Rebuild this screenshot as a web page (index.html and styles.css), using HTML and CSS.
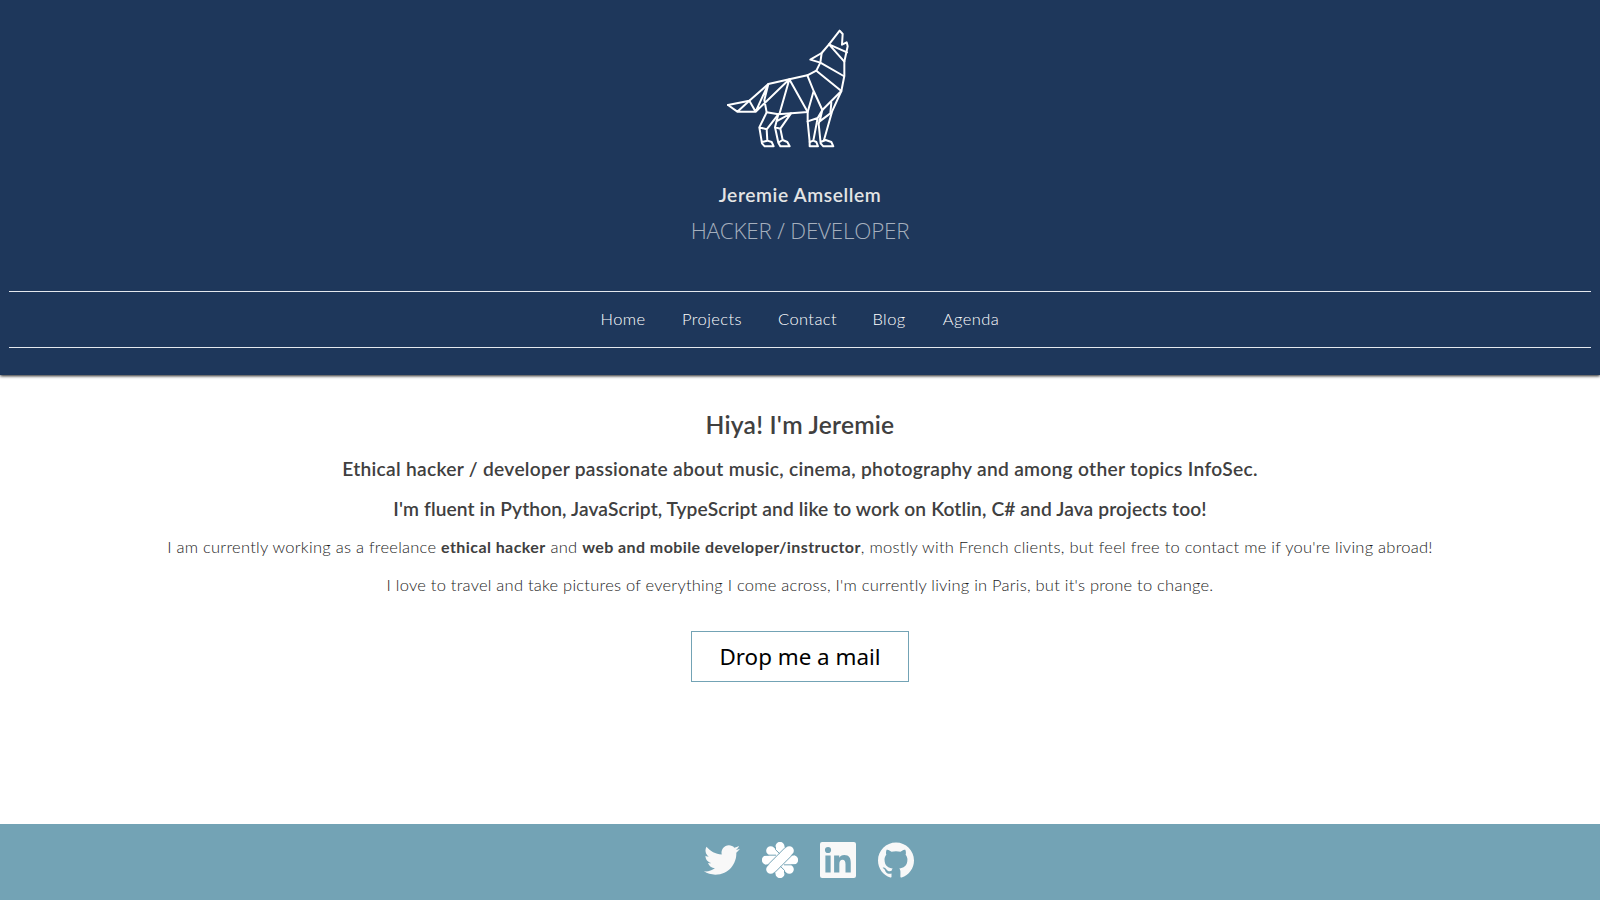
FILE: index.html
```html
<!DOCTYPE html>
<html lang="en">
<head>
<meta charset="utf-8">
<title>Jeremie Amsellem</title>
<link rel="stylesheet" href="styles.css">
</head>
<body>
<header class="header">
  <svg class="logo" viewBox="0 0 435 405" fill="none" stroke="#fff" stroke-width="6" stroke-linejoin="round" stroke-linecap="round">
    <path d="M39 255L103 242L160 192L223 178L277 166L304 152L316 128L286 119L320 99L342 73L374 32L383 42L381 74L395 67L398 79L388 125V168L379 213L351 275L327 360"/>
    <path d="M39 255L67 275H122L160 192L148 240L155 277L190 283L278 276L223 178L122 275L103 242L67 275M223 178L193 283"/>
    <path d="M320 99L316 128L386 168M304 152L379 213L322 270L296 213L277 166M342 73L388 125M342 73L396 97M296 213L278 276V304L284 366"/>
    <path d="M155 277L133 322L141 370L149 379H176L170 366L157 362L155 328L190 283M133 322L155 328M141 366L157 362"/>
    <path d="M190 283L180 322L190 368L196 379H224L217 366L203 360L196 326L228 280M180 322L196 326M184 304L228 280M190 368L203 360"/>
    <path d="M278 304L308 294L322 270L311 312L317 370L325 379H355L349 366L332 360M308 294L295 362L284 366V379H309L304 366L295 362M322 270L314 304L346 280L349 248M317 366L332 360"/>
  </svg>
  <h1 class="name">Jeremie Amsellem</h1>
  <p class="role">HACKER / DEVELOPER</p>
  <nav class="nav">
    <a>Home</a><a>Projects</a><a>Contact</a><a>Blog</a><a>Agenda</a>
  </nav>
</header>
<main class="main">
  <h2 class="hello">Hiya! I'm Jeremie</h2>
  <h3 class="lead lead-first">Ethical hacker / developer passionate about music, cinema, photography and among other topics InfoSec.</h3>
  <h3 class="lead lead-langs">I'm fluent in Python, JavaScript, TypeScript and like to work on Kotlin, C# and Java projects too!</h3>
  <p class="text">I am currently working as a freelance <b>ethical hacker</b> and <b>web and mobile developer/instructor</b>, mostly with French clients, but feel free to contact me if you're living abroad!</p>
  <p class="text text-travel">I love to travel and take pictures of everything I come across, I'm currently living in Paris, but it's prone to change.</p>
  <a class="mail">Drop me a mail</a>
</main>
<footer class="footer">
  <svg class="icon" viewBox="0 0 24 24"><path d="M24 4.557c-.883.392-1.832.656-2.828.775 1.017-.609 1.798-1.574 2.165-2.724-.951.564-2.005.974-3.127 1.195-.897-.957-2.178-1.555-3.594-1.555-3.179 0-5.515 2.966-4.797 6.045-4.091-.205-7.719-2.165-10.148-5.144-1.29 2.213-.669 5.108 1.523 6.574-.806-.026-1.566-.247-2.229-.616-.054 2.281 1.581 4.415 3.949 4.89-.693.188-1.452.232-2.224.084.626 1.956 2.444 3.379 4.6 3.419-2.07 1.623-4.678 2.348-7.29 2.04 2.179 1.397 4.768 2.212 7.548 2.212 9.142 0 14.307-7.721 13.995-14.646.962-.695 1.797-1.562 2.457-2.549z"/></svg>
  <svg class="icon" viewBox="186 66 108 108">
    <g stroke="#fff" stroke-linecap="round" fill="none">
      <path stroke-width="27" d="M240 79V90M240 150V161M199 120H210M270 120H281M212 92L225 105M255 135L268 148"/>
      <path stroke-width="27" d="M212 148L268 92"/>
    </g>
    <path fill="#fff" d="M192 108H228L196 134zM288 132H252L284 106zM227 80H253L258 84L236 106zM253 160H227L222 156L244 134z"/>
    <path stroke="#73a3b5" stroke-width="3" fill="none" d="M190 105.500H228M252 134.500H290M226.500 80V89L239 101M253.500 160V151L241 139M200 138L260 78M220 162L280 102"/>
  </svg>
  <svg class="icon" viewBox="0 0 24 24"><path fill-rule="evenodd" d="M1.4 0H22.6Q24 0 24 1.4V22.6Q24 24 22.6 24H1.4Q0 24 0 22.6V1.4Q0 0 1.4 0zM3.6 9V20.4H7.1V9zM5.35 3.3A2.05 2.05 0 1 0 5.35 7.4A2.05 2.05 0 1 0 5.35 3.3zM9.4 9V20.4H12.9V14.8C12.9 13 13.5 11.9 15 11.9S17 13.2 17 14.9V20.4H20.5V14.1C20.5 10.7 19.5 8.7 16.2 8.7C14.5 8.7 13.3 9.6 12.8 10.5V9z"/></svg>
  <svg class="icon" viewBox="0 0 24 24"><path d="M12 .297c-6.63 0-12 5.373-12 12 0 5.303 3.438 9.8 8.205 11.385.6.113.82-.258.82-.577 0-.285-.01-1.04-.015-2.04-3.338.724-4.042-1.61-4.042-1.61C4.422 18.07 3.633 17.7 3.633 17.7c-1.087-.744.084-.729.084-.729 1.205.084 1.838 1.236 1.838 1.236 1.07 1.835 2.809 1.305 3.495.998.108-.776.417-1.305.76-1.605-2.665-.3-5.466-1.332-5.466-5.93 0-1.31.465-2.38 1.235-3.22-.135-.303-.54-1.523.105-3.176 0 0 1.005-.322 3.3 1.23.96-.267 1.98-.399 3-.405 1.02.006 2.04.138 3 .405 2.28-1.552 3.285-1.23 3.285-1.23.645 1.653.24 2.873.12 3.176.765.84 1.23 1.91 1.23 3.22 0 4.61-2.805 5.625-5.475 5.92.42.36.81 1.096.81 2.22 0 1.606-.015 2.896-.015 3.286 0 .315.21.69.825.57C20.565 22.092 24 17.592 24 12.297c0-6.627-5.373-12-12-12"/></svg>
</footer>
</body>
</html>
```
FILE: styles.css
```css
* { box-sizing: border-box; }
body {
  margin: 0;
  min-height: 100vh;
  display: flex;
  flex-direction: column;
  background: #fff;
  color: #404040;
  font-family: Lato, sans-serif;
  text-align: center;
}
h1, h2, h3, p { margin: 0; white-space: nowrap; }
.header {
  height: 375px;
  padding: 20px 9px 27px;
  background: #1e375b;
  color: #e4e4e4;
  box-shadow: 0 1px 3px rgba(0, 0, 0, .9);
}
.logo { display: block; width: 145px; height: 135px; margin-left: 706px; }
.name { margin-top: 28px; font-size: 19.2px; line-height: 24px; font-weight: 600; letter-spacing: .6px; }
.role {
  margin: 9px 0 45px;
  font-family: "Open Sans", sans-serif;
  font-size: 22.4px;
  line-height: 30px;
  font-weight: 300;
  letter-spacing: -.2px;
  color: #a5afbd;
}
.nav {
  height: 57px;
  padding: 15px 0 16px;
  border-top: 1px solid #e4e8ee;
  border-bottom: 1px solid #e4e8ee;
  display: grid;
  grid-template-columns: 46px 60px 58px 34px 58px;
  column-gap: 36px;
  justify-content: center;
  font-size: 16.5px;
  line-height: 24px;
  font-weight: 300;
  letter-spacing: .4px;
  color: #fff;
}
.main {
  flex: 1;
  padding-top: 35px;
  display: flex;
  flex-direction: column;
  align-items: center;
}
.hello { font-size: 24.6px; line-height: 30px; font-weight: 600; letter-spacing: .22px; }
.lead { margin-top: 16px; font-size: 19.2px; line-height: 24px; font-weight: 600; }
.lead-first { margin-top: 17px; letter-spacing: .29px; }
.lead-langs { letter-spacing: .11px; }
.text { margin-top: 14px; font-size: 16.5px; line-height: 24px; font-weight: 300; letter-spacing: .26px; color: #1c1c1c; }
.text-travel { letter-spacing: .23px; }
.text b { font-size: 16px; font-weight: 700; letter-spacing: .42px; color: #404040; }
.mail {
  width: 218px;
  height: 51px;
  margin-top: 34px;
  border: 1px solid #73a3b5;
  font-family: "Noto Sans", sans-serif;
  font-size: 22.4px;
  line-height: 49px;
  color: #000;
}
.footer {
  height: 76px;
  padding: 18px 0 0 18px;
  display: flex;
  justify-content: center;
  gap: 22px;
  background: #73a3b5;
}
.icon { width: 36px; height: 36px; fill: #f8f8f8; }
```
